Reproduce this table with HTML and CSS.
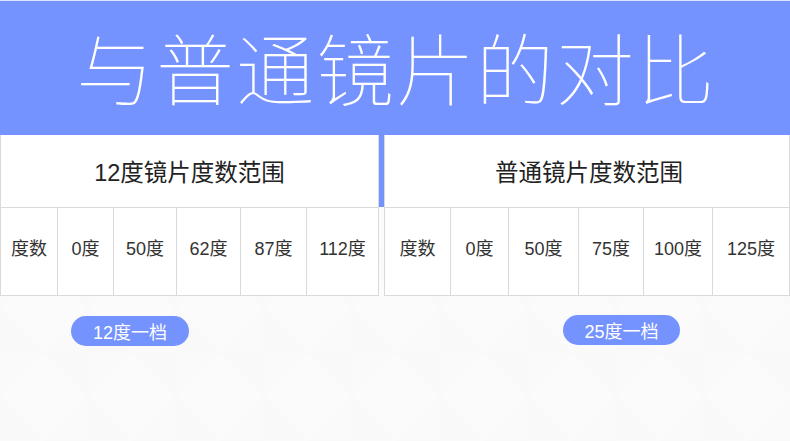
FILE: index.html
```html
<!DOCTYPE html>
<html lang="zh-CN">
<head>
<meta charset="utf-8">
<title>与普通镜片的对比</title>
<link rel="stylesheet" href="styles.css">
</head>
<body>
<header class="banner">
  <h1 class="title">与普通镜片的对比</h1>
</header>
<section class="tables">
  <div class="table table-left">
    <div class="thead">12度镜片度数范围</div>
    <div class="trow">
      <div class="cell c1">度数</div>
      <div class="cell c2">0度</div>
      <div class="cell c3">50度</div>
      <div class="cell c4">62度</div>
      <div class="cell c5">87度</div>
      <div class="cell c6">112度</div>
    </div>
  </div>
  <div class="strip"></div>
  <div class="table table-right">
    <div class="thead">普通镜片度数范围</div>
    <div class="trow">
      <div class="cell r1">度数</div>
      <div class="cell r2">0度</div>
      <div class="cell r3">50度</div>
      <div class="cell r4">75度</div>
      <div class="cell r5">100度</div>
      <div class="cell r6">125度</div>
    </div>
  </div>
</section>
<section class="pills">
  <span class="pill pill-left">12度一档</span>
  <span class="pill pill-right">25度一档</span>
</section>
</body>
</html>
```
FILE: styles.css
```css
* { box-sizing: border-box; }
html, body { margin: 0; padding: 0; }
body {
  width: 790px;
  height: 441px;
  overflow: hidden;
  background-color: #fbfbfb;
  background-image:
    linear-gradient(45deg, rgba(0,0,0,0.007) 25%, transparent 25%, transparent 75%, rgba(0,0,0,0.007) 75%),
    linear-gradient(-45deg, rgba(0,0,0,0.005) 25%, transparent 25%, transparent 75%, rgba(0,0,0,0.005) 75%);
  background-size: 88px 88px;
  font-family: "Liberation Sans", "Noto Sans CJK SC", sans-serif;
  color: #222;
}
.banner {
  height: 135px;
  border-top: 1px solid #dbe2fb;
  background: #7593fe;
  display: flex;
  align-items: center;
  justify-content: center;
  padding-bottom: 5px;
}
.title {
  margin: 0;
  font-family: "Noto Sans CJK SC", sans-serif;
  font-weight: 100;
  font-size: 78px;
  letter-spacing: 2px;
  line-height: 1;
  color: #fff;
  padding-left: 2px;
}
.tables {
  display: flex;
  align-items: flex-start;
}
.table {
  background: #fff;
  border-left: 1px solid #dadada;
  border-right: 1px solid #dadada;
  border-bottom: 1px solid #dadada;
}
.table-left { width: 379px; }
.table-right { width: 406px; }
.strip {
  width: 5px;
  height: 72px;
  background: #7593fe;
}
.thead {
  height: 73px;
  border-bottom: 1px solid #dadada;
  display: flex;
  align-items: center;
  justify-content: center;
  font-size: 23.5px;
  color: #222;
}
.table-right .thead { padding-left: 4px; }
.trow {
  display: flex;
  height: 87px;
}
.cell {
  display: flex;
  align-items: center;
  justify-content: center;
  padding-bottom: 10px;
  font-size: 18px;
  color: #333;
  border-right: 1px solid #dadada;
}
.cell:last-child { border-right: none; }
.c1 { width: 57px; }
.c2 { width: 56px; }
.c3 { width: 63px; }
.c4 { width: 64px; }
.c5 { width: 66px; }
.c6 { width: 71px; }
.r1 { width: 66px; }
.r2 { width: 58px; }
.r3 { width: 70px; }
.r4 { width: 65px; }
.r5 { width: 69px; }
.r6 { width: 76px; }
.pills {
  display: flex;
  align-items: flex-start;
  padding-top: 19px;
}
.pill {
  display: flex;
  align-items: center;
  justify-content: center;
  height: 30px;
  border-radius: 15px;
  background: #7593fe;
  color: #fff;
  font-size: 18px;
}
.pill-left { width: 118px; margin-left: 71px; margin-top: 1px; }
.pill-right { width: 117px; margin-left: 374px; }
```
